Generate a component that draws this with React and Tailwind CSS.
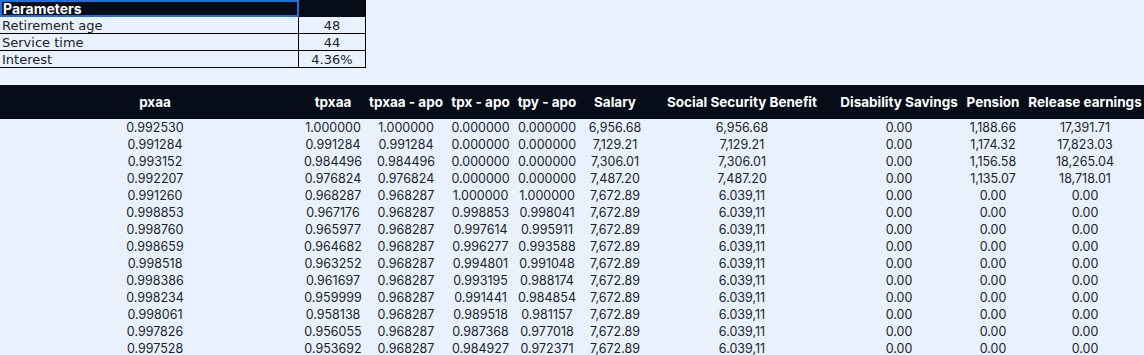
import React from "react";

const cols = [
  { w: "w-[310px]", h: "pxaa" },
  { w: "w-[46px]", h: "tpxaa" },
  { w: "w-[100px]", h: "tpxaa - apo" },
  { w: "w-[49px]", h: "tpx - apo" },
  { w: "w-[84px]", h: "tpy - apo" },
  { w: "w-[52px]", h: "Salary" },
  { w: "w-[202px]", h: "Social Security Benefit" },
  { w: "w-[112px]", h: "Disability Savings" },
  { w: "w-[76px]", h: "Pension" },
  { w: "w-[108px]", h: "Release earnings" },
];

const rows = [
  ["0.992530", "1.000000", "1.000000", "0.000000", "0.000000", "6,956.68", "6,956.68", "0.00", "1,188.66", "17,391.71"],
  ["0.991284", "0.991284", "0.991284", "0.000000", "0.000000", "7,129.21", "7,129.21", "0.00", "1,174.32", "17,823.03"],
  ["0.993152", "0.984496", "0.984496", "0.000000", "0.000000", "7,306.01", "7,306.01", "0.00", "1,156.58", "18,265.04"],
  ["0.992207", "0.976824", "0.976824", "0.000000", "0.000000", "7,487.20", "7,487.20", "0.00", "1,135.07", "18,718.01"],
  ["0.991260", "0.968287", "0.968287", "1.000000", "1.000000", "7,672.89", "6.039,11", "0.00", "0.00", "0.00"],
  ["0.998853", "0.967176", "0.968287", "0.998853", "0.998041", "7,672.89", "6.039,11", "0.00", "0.00", "0.00"],
  ["0.998760", "0.965977", "0.968287", "0.997614", "0.995911", "7,672.89", "6.039,11", "0.00", "0.00", "0.00"],
  ["0.998659", "0.964682", "0.968287", "0.996277", "0.993588", "7,672.89", "6.039,11", "0.00", "0.00", "0.00"],
  ["0.998518", "0.963252", "0.968287", "0.994801", "0.991048", "7,672.89", "6.039,11", "0.00", "0.00", "0.00"],
  ["0.998386", "0.961697", "0.968287", "0.993195", "0.988174", "7,672.89", "6.039,11", "0.00", "0.00", "0.00"],
  ["0.998234", "0.959999", "0.968287", "0.991441", "0.984854", "7,672.89", "6.039,11", "0.00", "0.00", "0.00"],
  ["0.998061", "0.958138", "0.968287", "0.989518", "0.981157", "7,672.89", "6.039,11", "0.00", "0.00", "0.00"],
  ["0.997826", "0.956055", "0.968287", "0.987368", "0.977018", "7,672.89", "6.039,11", "0.00", "0.00", "0.00"],
  ["0.997528", "0.953692", "0.968287", "0.984927", "0.972371", "7,672.89", "6.039,11", "0.00", "0.00", "0.00"],
];

const params = [
  ["Retirement age", "48"],
  ["Service time", "44"],
  ["Interest", "4.36%"],
];

export default function App() {
  return (
    <div className="w-[1144px] h-[355px] overflow-hidden bg-[#e8f1fc] text-[#1d1d2b] font-['Inter',sans-serif]">
      <div className="w-[366px] flex flex-col">
        <div className="flex h-[17px] bg-[#060d19]">
          <div className="w-[299px] border-2 border-[#1f6fd6] text-white font-bold text-[14px] leading-[13px] pl-[1px] flex items-center">
            Parameters
          </div>
          <div className="flex-1 border-r border-black" />
        </div>
        {params.map(([k, v]) => (
          <div key={k} className="flex h-[17px] border-b border-r border-black text-[13px] font-['DejaVu_Sans',sans-serif] leading-none">
            <div className="w-[299px] pl-[2px] flex items-center border-r border-black">{k}</div>
            <div className="flex-1 flex items-center justify-center">{v}</div>
          </div>
        ))}
      </div>
      <div className="mt-[17px]">
        <div className="flex h-[34px] bg-[#060d19] text-white font-bold text-[13.5px]">
          {cols.map((c) => (
            <div key={c.h} className={`${c.w} shrink-0 flex items-center justify-center whitespace-nowrap`}>
              {c.h}
            </div>
          ))}
        </div>
        {rows.map((r, i) => (
          <div key={i} className="flex h-[17px] pt-[1px] text-[12.5px] leading-none">
            {r.map((v, j) => (
              <div key={j} className={`${cols[j].w} shrink-0 flex items-center justify-center whitespace-nowrap`}>
                {v}
              </div>
            ))}
          </div>
        ))}
      </div>
    </div>
  );
}
